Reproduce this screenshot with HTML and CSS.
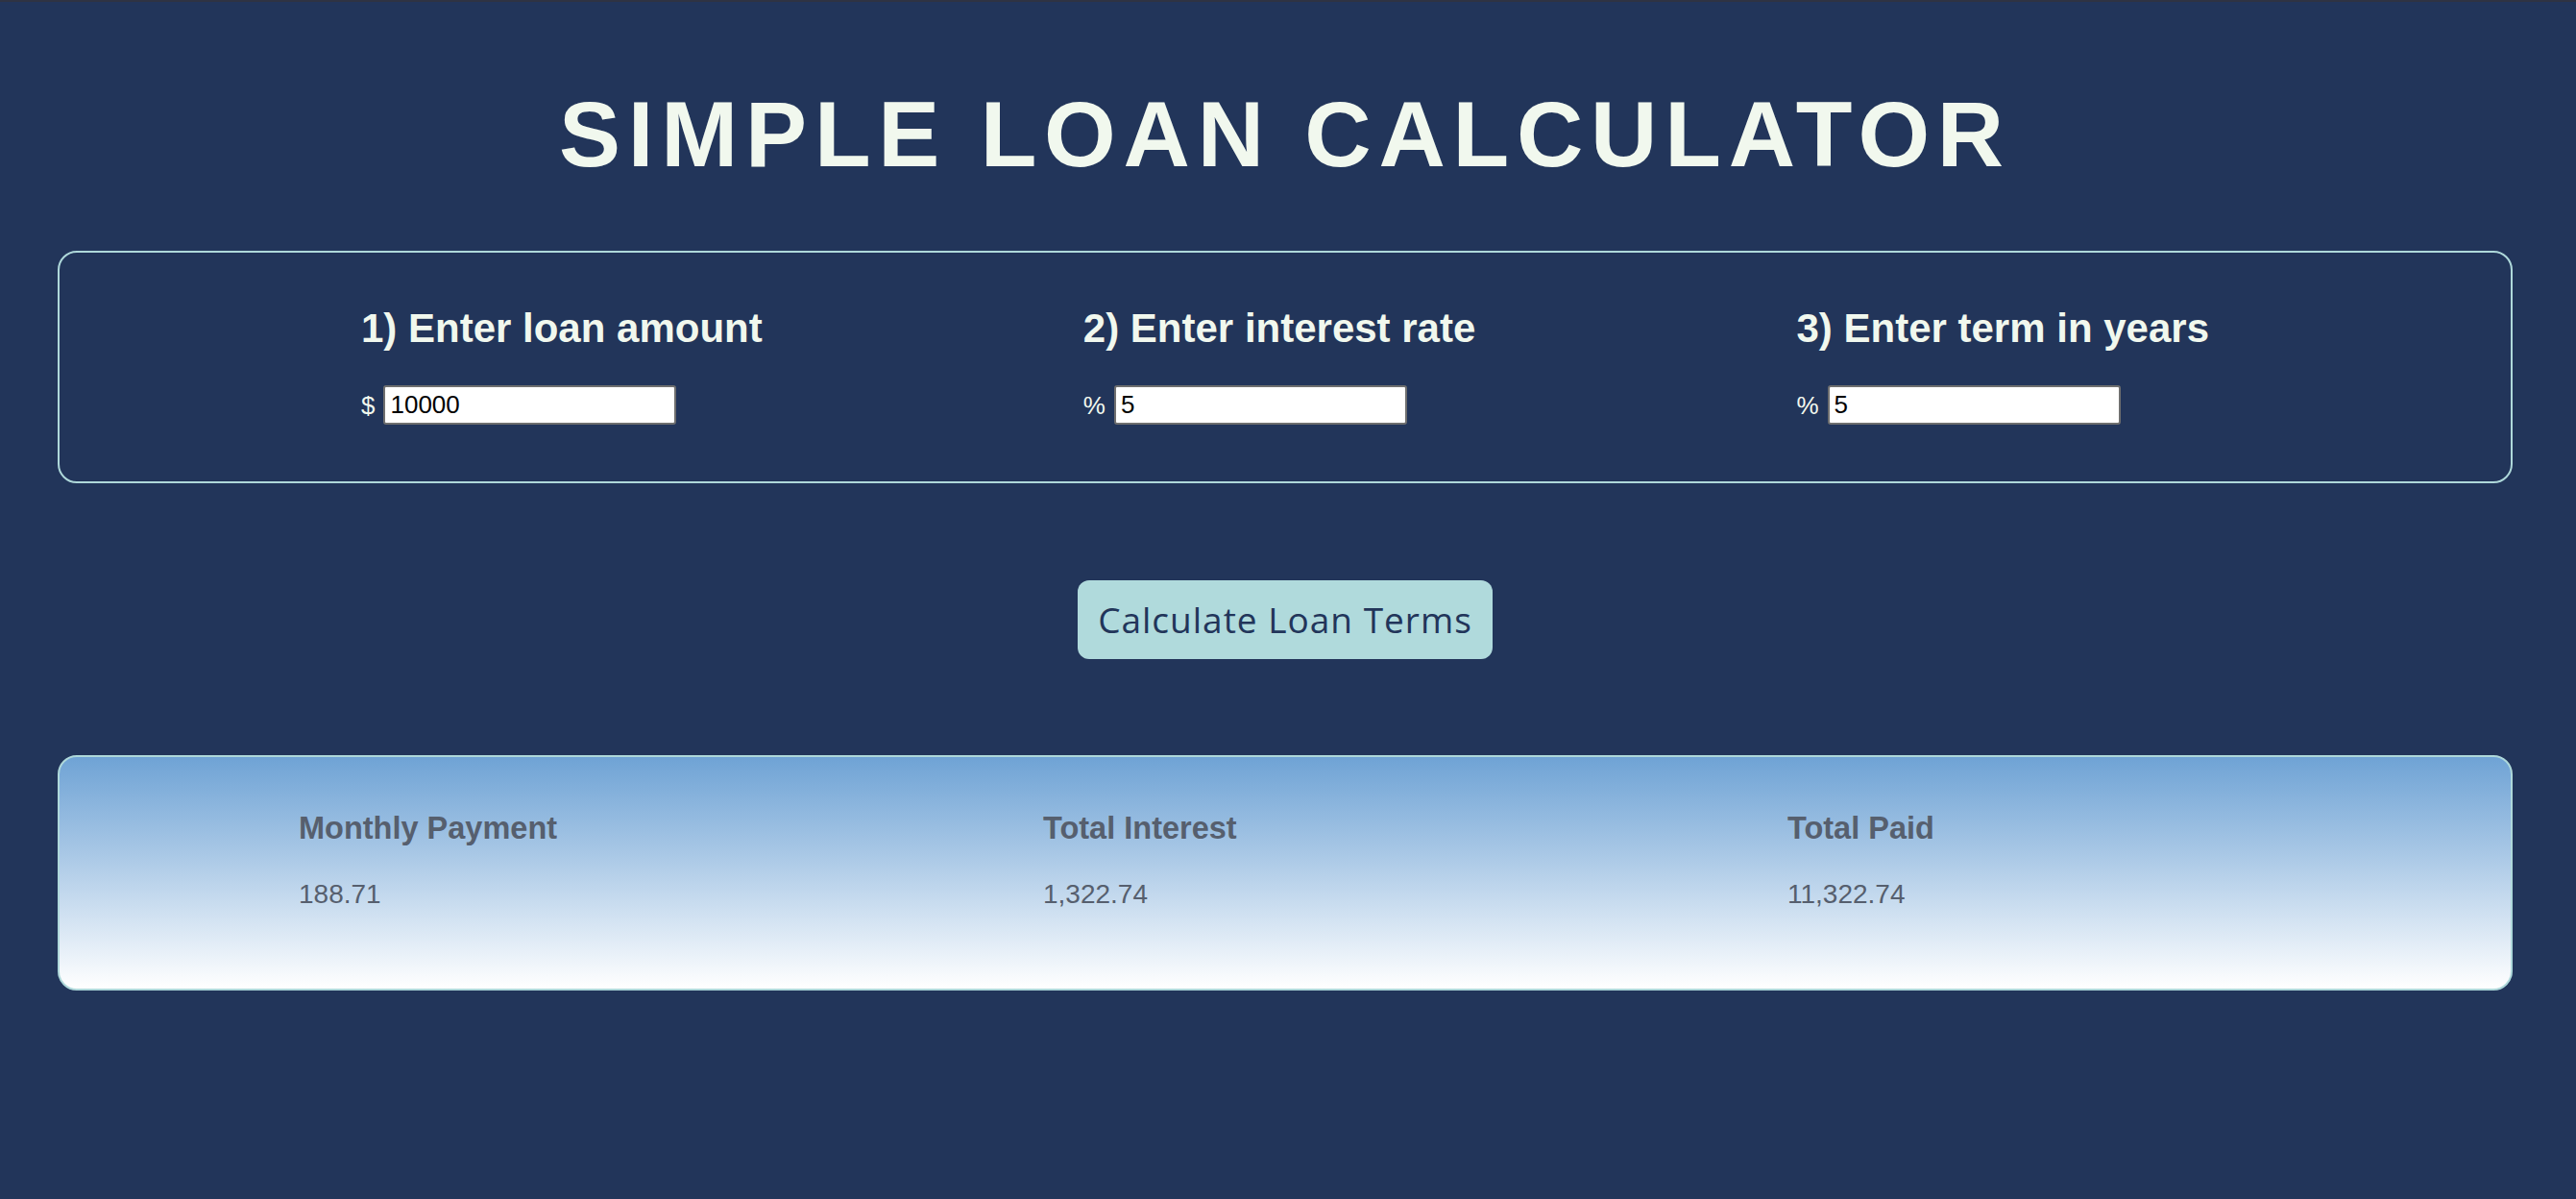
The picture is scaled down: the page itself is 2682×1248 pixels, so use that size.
FILE: index.html
```html
<!DOCTYPE html>
<html lang="en">
<head>
<meta charset="utf-8">
<title>Simple Loan Calculator</title>
<link rel="stylesheet" href="styles.css">
</head>
<body>
<div class="page">
  <h1 class="title">SIMPLE LOAN CALCULATOR</h1>

  <section class="inputs">
    <div class="field">
      <h3 class="field-title">1) Enter loan amount</h3>
      <label class="field-row"><span class="unit">$</span><input class="field-input" type="text" value="10000"></label>
    </div>
    <div class="field">
      <h3 class="field-title">2) Enter interest rate</h3>
      <label class="field-row"><span class="unit">%</span><input class="field-input" type="text" value="5"></label>
    </div>
    <div class="field">
      <h3 class="field-title">3) Enter term in years</h3>
      <label class="field-row"><span class="unit">%</span><input class="field-input" type="text" value="5"></label>
    </div>
  </section>

  <div class="actions">
    <button class="calc-btn" type="button">Calculate Loan Terms</button>
  </div>

  <section class="results">
    <div class="result">
      <h4 class="result-title">Monthly Payment</h4>
      <p class="result-value">188.71</p>
    </div>
    <div class="result">
      <h4 class="result-title">Total Interest</h4>
      <p class="result-value">1,322.74</p>
    </div>
    <div class="result">
      <h4 class="result-title">Total Paid</h4>
      <p class="result-value">11,322.74</p>
    </div>
  </section>
</div>
</body>
</html>
```

FILE: styles.css
```css
* {
  box-sizing: border-box;
}

html, body {
  margin: 0;
  padding: 0;
}

body {
  background: #22355a;
  border-top: 2px solid #2f3343;
  min-height: 100vh;
  font-family: "Liberation Sans", Arial, Helvetica, sans-serif;
}

.page {
  margin-right: 6px;
  padding-top: 83px;
  padding-bottom: 60px;
}

.title {
  margin: 0;
  text-align: center;
  color: #f1f8ee;
  font-size: 96px;
  line-height: 110px;
  font-weight: 700;
  letter-spacing: 7.8px;
}

.inputs {
  margin: 66px 60px 0 60px;
  border: 2px solid #aed8da;
  border-radius: 20px;
  padding: 55px 314px 59px 314px;
  display: flex;
  justify-content: space-between;
}

.field-title {
  margin: 0;
  color: #f1f8ee;
  font-size: 42px;
  line-height: 48px;
  font-weight: 700;
}

.field-row {
  margin-top: 35px;
  display: flex;
  align-items: center;
  gap: 9px;
}

.unit {
  color: #f1f8ee;
  font-size: 26px;
  line-height: 30px;
}

.field-input {
  width: 305px;
  height: 41px;
  border: 2px solid #6f6f6f;
  border-radius: 3px;
  background: #ffffff;
  color: #000000;
  padding: 2px 5px;
  font-family: "Liberation Sans", Arial, Helvetica, sans-serif;
  font-size: 26px;
  outline: none;
}

.actions {
  margin-top: 101px;
  display: flex;
  justify-content: center;
}

.calc-btn {
  background: #b0dadc;
  color: #22355a;
  border: none;
  border-radius: 12px;
  padding: 18px 21px;
  font-family: "Open Sans", "Noto Sans", sans-serif;
  font-size: 37px;
  line-height: 46px;
  font-weight: 400;
  letter-spacing: 1px;
  cursor: pointer;
}

.results {
  margin: 100px 60px 0 60px;
  border: 2px solid #aed8da;
  border-radius: 20px;
  background: linear-gradient(to bottom, #6fa3d5 0%, #a6c6e5 40%, #ffffff 100%);
  padding: 56px 0 82px 249px;
  display: grid;
  grid-template-columns: 775px 775px auto;
}

.result-title {
  margin: 0;
  color: #565f6e;
  font-size: 32.5px;
  line-height: 37px;
  font-weight: 700;
}

.result-value {
  margin: 34px 0 0 0;
  color: #565f6e;
  font-size: 28px;
  line-height: 32px;
}
```
